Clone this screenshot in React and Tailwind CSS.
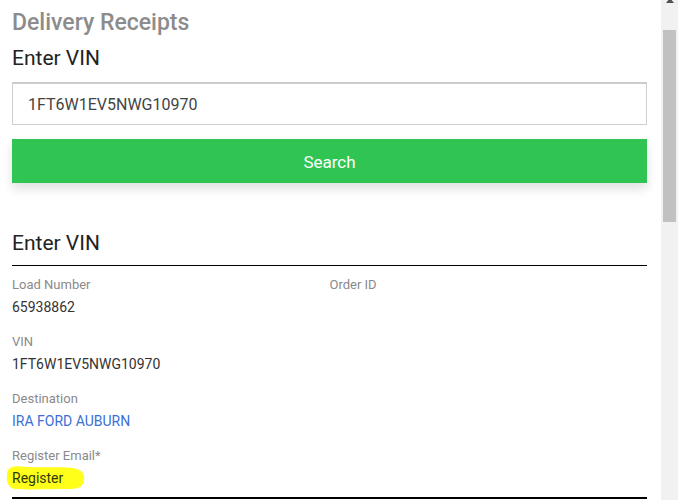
import React from "react";

function Field({ label, value, valueClass = "text-[#333]" }) {
  return (
    <div className="flex flex-col">
      <div className="text-[13px] leading-[18px] text-[#8a8a8a]">{label}</div>
      <div className={`mt-[3px] text-[14px] leading-[20px] ${valueClass}`}>{value}</div>
    </div>
  );
}

export default function App() {
  return (
    <div
      className="relative flex h-[500px] w-[678px] overflow-hidden bg-white"
      style={{ fontFamily: "Roboto, 'Liberation Sans', sans-serif" }}
    >
      <div className="flex w-[661px] flex-col pl-[12px] pr-[14px]">
        <h1 className="mt-[9px] text-[23px] leading-[28px] font-medium text-[#8c8c8c]">Delivery Receipts</h1>
        <h2 className="mt-[8px] text-[21px] leading-[26px] text-[#222]">Enter VIN</h2>
        <div className="mt-[11px] flex h-[43px] items-center border border-[#cfcfcf] border-t-2 border-t-[#cccccc] pl-[15px] pt-[1px] text-[16px] text-[#444]">
          1FT6W1EV5NWG10970
        </div>
        <button className="mt-[14px] flex h-[44px] shrink-0 items-center justify-center bg-[#30c552] pt-[3px] text-[17px] text-white shadow-[0_6px_10px_rgba(0,0,0,0.12)]">
          Search
        </button>
        <h2 className="mt-[47px] text-[21px] leading-[26px] text-[#222]">Enter VIN</h2>
        <div className="mt-[9px] border-t border-black" />
        <div className="mt-[10px] grid grid-cols-2">
          <div className="flex flex-col gap-[16px]">
            <Field label="Load Number" value="65938862" />
            <Field label="VIN" value="1FT6W1EV5NWG10970" />
            <Field label="Destination" value="IRA FORD AUBURN" valueClass="text-[#3a6fd8]" />
            <div className="flex flex-col">
              <div className="text-[13px] leading-[18px] text-[#8a8a8a]">Register Email*</div>
              <div className="relative mt-[3px] text-[14px] leading-[20px]">
                <svg className="absolute left-[-7px] top-[-4px]" width="84" height="28" viewBox="0 0 84 28">
                  <path
                    d="M3 6 C 6 1, 14 2, 22 3 C 42 4, 62 2, 72 5 C 78 7, 80 12, 79 17 C 78 22, 74 25, 66 25 C 48 25, 26 26, 10 25 C 4 24, 1 18, 2 12 C 2 9, 2 8, 3 6 Z"
                    fill="#ffff1a"
                  />
                </svg>
                <span className="relative text-[#2e3a05]">Register</span>
              </div>
            </div>
          </div>
          <div className="flex flex-col">
            <div className="text-[13px] leading-[18px] text-[#8a8a8a]">Order ID</div>
          </div>
        </div>
        <div className="mt-[9px] border-t-2 border-black" />
      </div>
      <div className="relative w-[17px] bg-[#f1f1f1]">
        <div className="absolute left-1/2 top-[-2px] h-0 w-0 -translate-x-1/2 border-x-[4px] border-b-[5px] border-x-transparent border-b-[#505050]" />
        <div className="absolute left-[2px] right-[2px] top-[30px] h-[192px] bg-[#c1c1c1]" />
      </div>
    </div>
  );
}
